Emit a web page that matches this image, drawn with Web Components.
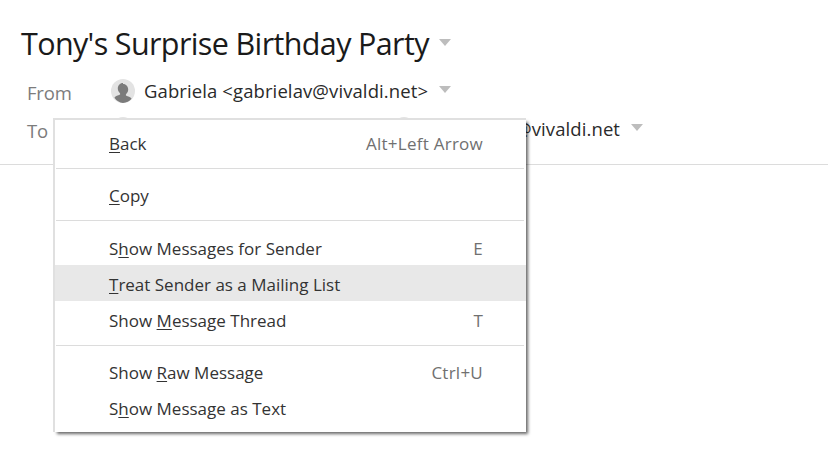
<!DOCTYPE html>
<html>
<head>
<meta charset="utf-8">
<title>Mail</title>
<style>
    html, body { margin: 0; background: #fff; }
    body { font-family: "Open Sans", "Noto Sans", sans-serif; overflow: hidden; height: 466px; position: relative; }
</style>
</head>
<body>
<mail-header subject="Tony's Surprise Birthday Party">
    <mail-row label="From">
        <mail-person name="Gabriela &lt;gabrielav@vivaldi.net&gt;" caret></mail-person>
    </mail-row>
    <mail-row label="To">
        <mail-person></mail-person>
        <mail-person style="margin-left:257px" name="@vivaldi.net" gap="99" caret></mail-person>
    </mail-row>
</mail-header>
<context-menu>
    <menu-item shortcut="Alt+Left Arrow"><u>B</u>ack</menu-item>
    <menu-sep style="margin-bottom:7px"></menu-sep>
    <menu-item><u>C</u>opy</menu-item>
    <menu-sep></menu-sep>
    <menu-item shortcut="E">S<u>h</u>ow Messages for Sender</menu-item>
    <menu-item active><u>T</u>reat Sender as a Mailing List</menu-item>
    <menu-item shortcut="T">Show <u>M</u>essage Thread</menu-item>
    <menu-sep style="margin-bottom:7px"></menu-sep>
    <menu-item shortcut="Ctrl+U">Show <u>R</u>aw Message</menu-item>
    <menu-item>S<u>h</u>ow Message as Text</menu-item>
</context-menu>
<script>
const caretSvg = `<svg width="12" height="7" viewBox="0 0 12 7"><path d="M0 0H12L6 7Z" fill="#bdbdbd"/></svg>`;

class MailHeader extends HTMLElement {
    constructor() {
        super();
        this.attachShadow({ mode: "open" });
    }
    connectedCallback() {
        this.shadowRoot.innerHTML = `
            <style>
                :host { display: block; height: 164px; border-bottom: 1px solid #dcdcdc; box-sizing: content-box; }
                h1 { margin: 0; padding: 21px 0 1px 21px; height: 44px; display: flex; align-items: center; gap: 10px;
                     font-size: 30.5px; font-weight: 400; color: #1a1a1a; letter-spacing: -0.63px; line-height: 44px; }
                h1 svg { margin-top: -1px; }
                .rows { padding-top: 6px; }
            </style>
            <h1><span>${this.getAttribute("subject")}</span>${caretSvg}</h1>
            <div class="rows"><slot></slot></div>
        `;
    }
}

class MailRow extends HTMLElement {
    constructor() {
        super();
        this.attachShadow({ mode: "open" });
    }
    connectedCallback() {
        this.shadowRoot.innerHTML = `
            <style>
                :host { display: flex; align-items: center; height: 38px; padding-left: 27px; }
                .label { width: 84px; font-size: 18.5px; color: #7c7c7c; letter-spacing: -0.2px; padding-top: 2px; }
            </style>
            <span class="label">${this.getAttribute("label")}</span>
            <slot></slot>
        `;
    }
}

class MailPerson extends HTMLElement {
    constructor() {
        super();
        this.attachShadow({ mode: "open" });
    }
    connectedCallback() {
        const name = this.getAttribute("name");
        const gap = this.getAttribute("gap") || 9;
        this.shadowRoot.innerHTML = `
            <style>
                :host { display: flex; align-items: center; font-size: 18.5px; color: #2a2a2a; letter-spacing: 0.1px; }
                svg.face { display: block; }
                .name { margin-left: ${gap}px; margin-top: -2px; }
                .caret { margin-left: 11px; display: flex; margin-top: -3px; }
            </style>
            <svg class="face" width="24" height="24" viewBox="0 0 24 24">
                <circle cx="12" cy="12" r="12" fill="#e3e3e3"/>
                <path d="M12 4c-3.200 0-5.200 2.500-5.200 5.600 0 2 1 3.700 2.300 4.800v1.200c-2.200.9-4.500 1.500-5.700 3.200A12 12 0 0 0 12 24a12 12 0 0 0 8.600-4.200c-1.200-1.700-3.500-2.300-5.700-3.200v-1.200c1.300-1.100 2.300-2.800 2.300-4.800 0-3.100-2-5.600-5.200-5.600Z" fill="#7b7b7b"/>
            </svg>
            ${name ? `<span class="name"></span><span class="caret">${caretSvg}</span>` : ""}
        `;
        if (name) this.shadowRoot.querySelector(".name").textContent = name;
    }
}

class ContextMenu extends HTMLElement {
    constructor() {
        super();
        this.attachShadow({ mode: "open" });
    }
    connectedCallback() {
        this.shadowRoot.innerHTML = `
            <style>
                /* sits over the header, so it is placed absolutely */
                :host { position: absolute; left: 53px; top: 118px; width: 473px; height: 314px; box-sizing: border-box;
                        display: block; background: #fff; padding: 4px 0 0 0;
                        border-top: 2px solid #e0e0e0; border-left: 2px solid #e0e0e0;
                        box-shadow: 3px 3px 3px -1px rgba(0,0,0,.6); }
            </style>
            <slot></slot>
        `;
    }
}

class MenuItem extends HTMLElement {
    constructor() {
        super();
        this.attachShadow({ mode: "open" });
    }
    connectedCallback() {
        this.shadowRoot.innerHTML = `
            <style>
                :host { display: flex; align-items: center; justify-content: space-between; height: 36px; box-sizing: border-box;
                        padding: 2px 43px 0 54px; font-size: 17px; color: #333; }
                :host([active]) { background: #e8e8e8; }
                .key { color: #707070; letter-spacing: 0.25px; }
                ::slotted(u) { text-underline-offset: 2px; }
            </style>
            <span><slot></slot></span>
            <span class="key">${this.getAttribute("shortcut") || ""}</span>
        `;
    }
}

class MenuSep extends HTMLElement {
    constructor() {
        super();
        this.attachShadow({ mode: "open" });
    }
    connectedCallback() {
        this.shadowRoot.innerHTML = `
            <style>
                :host { display: block; height: 1px; background: #dcdcdc; margin: 8px 2px 8px 1px; }
            </style>
        `;
    }
}

customElements.define("mail-header", MailHeader);
customElements.define("mail-row", MailRow);
customElements.define("mail-person", MailPerson);
customElements.define("context-menu", ContextMenu);
customElements.define("menu-item", MenuItem);
customElements.define("menu-sep", MenuSep);
</script>
</body>
</html>
